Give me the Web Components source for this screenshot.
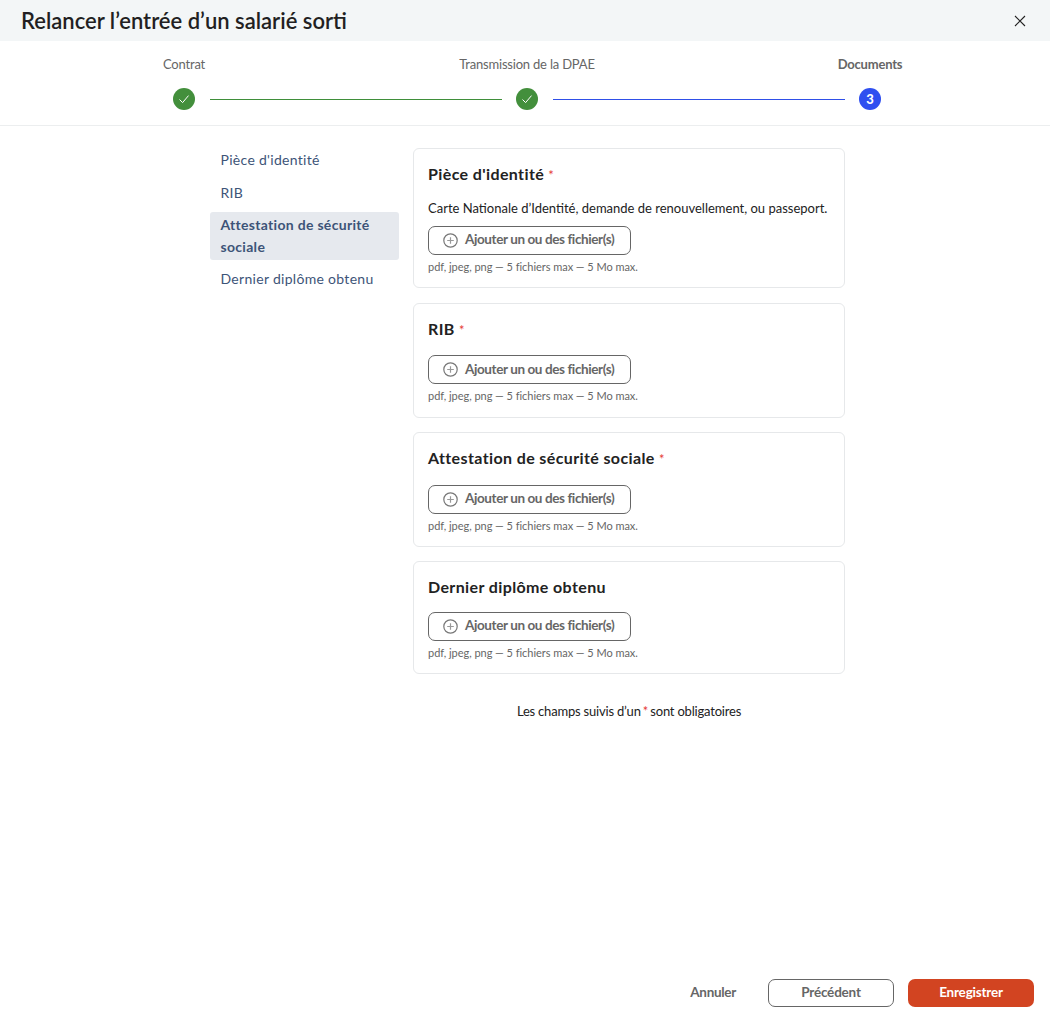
<!DOCTYPE html>
<html lang="fr">
<head>
<meta charset="utf-8">
<title>Relancer l'entrée d'un salarié sorti</title>
<style>
    html, body {
        margin: 0;
        height: 100%;
        background: #fff;
        font-family: Lato, "Liberation Sans", sans-serif;
    }
</style>
</head>
<body>
<salarie-modal>
    <modal-header slot="header">Relancer l’entrée d’un salarié sorti</modal-header>
    <step-bar slot="steps"></step-bar>
    <side-nav slot="nav"></side-nav>
    <doc-card slot="cards" title-text="Pièce d'identité" required hint="Carte Nationale d’Identité, demande de renouvellement, ou passeport."></doc-card>
    <doc-card slot="cards" title-text="RIB" required></doc-card>
    <doc-card slot="cards" title-text="Attestation de sécurité sociale" required></doc-card>
    <doc-card slot="cards" title-text="Dernier diplôme obtenu" compact></doc-card>
    <modal-footer slot="footer"></modal-footer>
</salarie-modal>

<script>
class SalarieModal extends HTMLElement {
    constructor() {
        super();
        this.shadowDOM = this.attachShadow({ mode: "open" });
    }

    connectedCallback() {
        this.shadowDOM.innerHTML = `
        <style>
            :host {
                display: flex;
                flex-direction: column;
                height: 1022px;
                box-sizing: border-box;
                color: #222;
            }
            .content {
                display: flex;
                gap: 14px;
                padding: 22px 0 0 210px;
            }
            .cards {
                width: 432px;
                display: flex;
                flex-direction: column;
            }
            .note {
                margin-top: 14.5px;
                text-align: center;
                font-size: 13px;
                line-height: 16px;
                letter-spacing: -0.2px;
                color: #222;
            }
            .note span { color: #e53935; margin: 0 -1px; }
            ::slotted(modal-footer) { margin-top: auto; }
        </style>
        <slot name="header"></slot>
        <slot name="steps"></slot>
        <div class="content">
            <slot name="nav"></slot>
            <div class="cards">
                <slot name="cards"></slot>
                <div class="note">Les champs suivis d’un <span>*</span> sont obligatoires</div>
            </div>
        </div>
        <slot name="footer"></slot>`;
    }
}

class ModalHeader extends HTMLElement {
    constructor() {
        super();
        this.shadowDOM = this.attachShadow({ mode: "open" });
    }

    connectedCallback() {
        this.shadowDOM.innerHTML = `
        <style>
            :host {
                display: flex;
                align-items: center;
                justify-content: space-between;
                height: 41px;
                padding: 0 24px 0 21px;
                background: #f3f6f7;
            }
            h1 {
                margin: 0;
                font-size: 22px;
                font-weight: 600;
                color: #221f22;
            }
            svg { display: block; }
        </style>
        <h1><slot></slot></h1>
        <svg width="12" height="12" viewBox="0 0 12 12" fill="none" stroke="#222" stroke-width="1.1">
            <path d="M1 1 L11 11 M11 1 L1 11"/>
        </svg>`;
    }
}

class StepBar extends HTMLElement {
    constructor() {
        super();
        this.shadowDOM = this.attachShadow({ mode: "open" });
    }

    dot(step) {
        if (step.num) return `<div class="dot blue">${step.num}</div>`;
        return `<div class="dot green">
            <svg width="12" height="12" viewBox="0 0 12 12" fill="none" stroke="#fff" stroke-width="1">
                <path d="M1.5 6.5 L4.6 9.6 L10.5 2.6"/>
            </svg></div>`;
    }

    connectedCallback() {
        const steps = [
            { label: "Contrat", line: "#3f8f3a" },
            { label: "Transmission de la DPAE", line: "#2f4fe8" },
            { label: "Documents", num: 3, current: true }
        ];
        const labels = steps.map((s, i) =>
            `<div class="label ${s.current ? "current" : ""}" style="grid-column:${i * 2 + 1}">${s.label}</div>`
        ).join("");
        const track = steps.map(s =>
            this.dot(s) + (s.line ? `<div class="line" style="background:${s.line}"></div>` : "")
        ).join("");
        this.shadowDOM.innerHTML = `
        <style>
            :host {
                display: grid;
                grid-template-columns: 22px 1fr 22px 1fr 22px;
                grid-template-rows: 16px 22px;
                column-gap: 14px;
                row-gap: 16px;
                align-items: center;
                padding: 15px 169px 15px 173px;
                border-bottom: 1px solid #eceeef;
            }
            .label {
                justify-self: center;
                white-space: nowrap;
                font-size: 13px;
                line-height: 16px;
                letter-spacing: -0.2px;
                color: #666;
                grid-row: 1;
            }
            .label.current { font-weight: 700; }
            .dot {
                grid-row: 2;
                width: 22px;
                height: 22px;
                border-radius: 50%;
                display: flex;
                align-items: center;
                justify-content: center;
                color: #fff;
                font-size: 13px;
                font-weight: 900;
            }
            .green { background: #438f3c; }
            .blue { background: #2f4ff0; }
            .line { grid-row: 2; height: 1px; margin-left: 1px; }
        </style>
        ${labels}${track}`;
    }
}

class SideNav extends HTMLElement {
    constructor() {
        super();
        this.shadowDOM = this.attachShadow({ mode: "open" });
    }

    connectedCallback() {
        const items = ["Pièce d'identité", "RIB", "Attestation de sécurité sociale", "Dernier diplôme obtenu"];
        this.shadowDOM.innerHTML = `
        <style>
            :host {
                display: flex;
                flex-direction: column;
                width: 189px;
                align-self: flex-start;
            }
            a {
                display: block;
                padding: 0 10.5px;
                margin-bottom: 10px;
                font-size: 14px;
                line-height: 23px;
                letter-spacing: 0.3px;
                color: #3d5478;
                border-radius: 3px;
            }
            a.active {
                margin-top: -2px;
                margin-bottom: 7px;
                padding: 2px 10.5px;
                font-weight: 700;
                line-height: 22px;
                background: #e6e9ee;
            }
        </style>
        ${items.map((t, i) => `<a class="${i === 2 ? "active" : ""}">${t}</a>`).join("")}`;
    }
}

class UploadButton extends HTMLElement {
    constructor() {
        super();
        this.shadowDOM = this.attachShadow({ mode: "open" });
    }

    connectedCallback() {
        this.shadowDOM.innerHTML = `
        <style>
            :host {
                display: inline-flex;
                align-items: center;
                gap: 7px;
                box-sizing: border-box;
                width: 203px;
                height: 29px;
                padding-left: 14px;
                border: 1px solid #666;
                border-radius: 7px;
                font-size: 13.5px;
                font-weight: 700;
                letter-spacing: -0.4px;
                color: #666;
            }
            svg { display: block; flex: none; }
            span { margin-bottom: 2px; }
        </style>
        <svg width="15" height="15" viewBox="0 0 15 15" fill="none" stroke="#777">
            <circle cx="7.5" cy="7.5" r="6.7" stroke-width="1.2"/>
            <path d="M7.5 4.2 V10.8 M4.2 7.5 H10.8" stroke="#999" stroke-width="1.2"/>
        </svg>
        <span>Ajouter un ou des fichier(s)</span>`;
    }
}

class DocCard extends HTMLElement {
    constructor() {
        super();
        this.shadowDOM = this.attachShadow({ mode: "open" });
    }

    connectedCallback() {
        const hint = this.getAttribute("hint");
        const star = this.hasAttribute("required") ? `<span class="star">*</span>` : "";
        this.shadowDOM.innerHTML = `
        <style>
            :host {
                display: block;
                box-sizing: border-box;
                padding: 15px 14px 13.5px;
                margin-bottom: 14.5px;
                border: 1px solid #e6e8ea;
                border-radius: 6px;
                background: #fff;
            }
            :host([compact]) { margin-top: -0.5px; }
            h2 {
                margin: 0;
                font-size: 16px;
                font-weight: 700;
                line-height: 20px;
                letter-spacing: 0.38px;
                color: #222;
            }
            .star {
                color: #e53935;
                font-size: 13px;
                font-weight: 400;
                line-height: 0;
            }
            .hint {
                margin-top: 13.5px;
                height: 20px;
                font-size: 13px;
                line-height: 20px;
                white-space: nowrap;
                color: #222;
            }
            .spacer { height: 16.5px; }
            .compact { height: 14.5px; }
            upload-button { display: flex; }
            .hint + upload-button { margin-top: 8px; }
            .formats {
                margin-top: 4px;
                font-size: 11px;
                line-height: 15px;
                letter-spacing: -0.04px;
                color: #666;
            }
        </style>
        <h2>${this.getAttribute("title-text")} ${star}</h2>
        ${hint ? `<div class="hint">${hint}</div>` : `<div class="spacer ${this.hasAttribute("compact") ? "compact" : ""}"></div>`}
        <upload-button></upload-button>
        <div class="formats">pdf, jpeg, png — 5 fichiers max — 5 Mo max.</div>`;
    }
}

class ModalFooter extends HTMLElement {
    constructor() {
        super();
        this.shadowDOM = this.attachShadow({ mode: "open" });
    }

    connectedCallback() {
        this.shadowDOM.innerHTML = `
        <style>
            :host {
                display: flex;
                justify-content: flex-end;
                align-items: center;
                gap: 14px;
                padding: 0 16px 15px 0;
            }
            button {
                box-sizing: border-box;
                width: 126px;
                height: 28px;
                padding: 0 0 2px;
                border-radius: 7px;
                font-family: inherit;
                font-size: 13.5px;
                font-weight: 700;
                letter-spacing: -0.2px;
                cursor: pointer;
            }
            .plain {
                width: auto;
                margin-right: 18px;
                border: 0;
                background: none;
                letter-spacing: -0.3px;
                color: #666;
            }
            .outline { border: 1px solid #666; background: #fff; color: #666; }
            .primary { border: 0; background: #d24421; color: #fff; }
        </style>
        <button class="plain">Annuler</button>
        <button class="outline">Précédent</button>
        <button class="primary">Enregistrer</button>`;
    }
}

customElements.define("salarie-modal", SalarieModal);
customElements.define("modal-header", ModalHeader);
customElements.define("step-bar", StepBar);
customElements.define("side-nav", SideNav);
customElements.define("upload-button", UploadButton);
customElements.define("doc-card", DocCard);
customElements.define("modal-footer", ModalFooter);
</script>
</body>
</html>
